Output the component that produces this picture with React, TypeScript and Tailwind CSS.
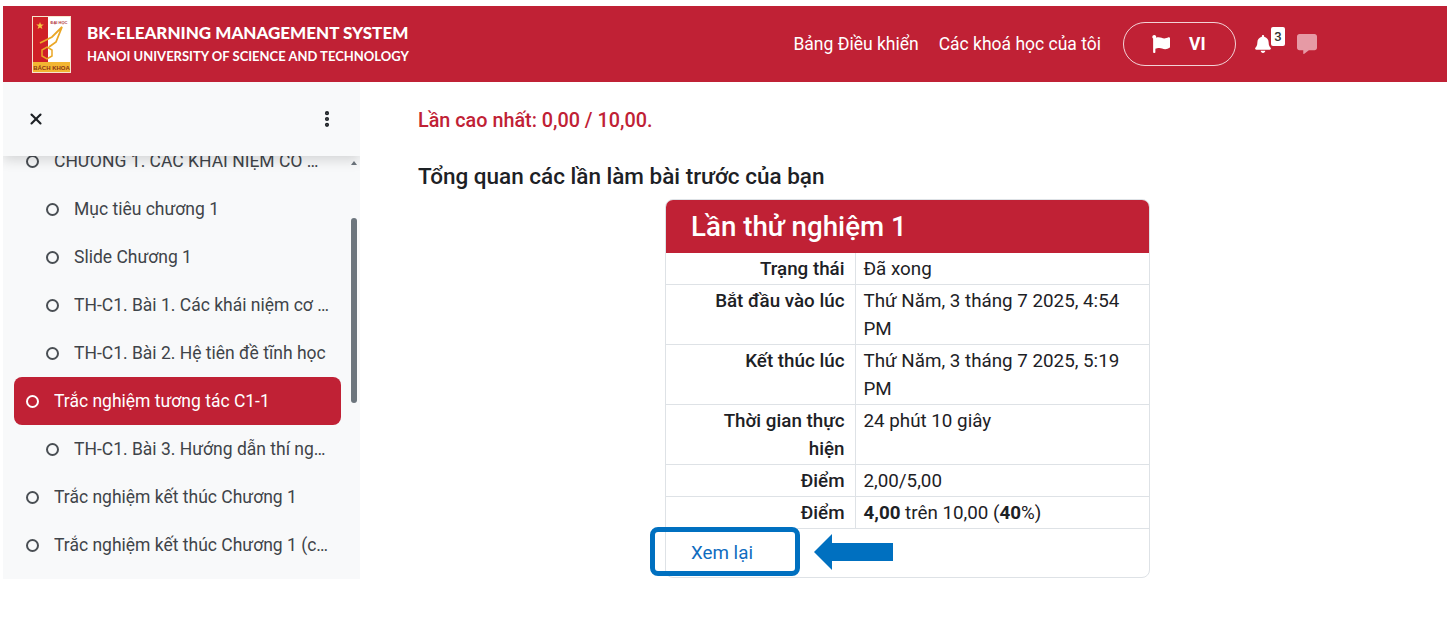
import { MoreVertical, X } from 'lucide-react';
import type { ReactNode } from 'react';
import { FaBell, FaCommentAlt, FaFlag } from 'react-icons/fa';

const rows = [
  { label: 'CHƯƠNG 1. CÁC KHÁI NIỆM CƠ BẢN', sub: false },
  { label: 'Mục tiêu chương 1', sub: true },
  { label: 'Slide Chương 1', sub: true },
  { label: 'TH-C1. Bài 1. Các khái niệm cơ bản', sub: true },
  { label: 'TH-C1. Bài 2. Hệ tiên đề tĩnh học', sub: true },
  { label: 'Trắc nghiệm tương tác C1-1', sub: false, active: true },
  { label: 'TH-C1. Bài 3. Hướng dẫn thí nghiệm', sub: true },
  { label: 'Trắc nghiệm kết thúc Chương 1', sub: false },
  { label: 'Trắc nghiệm kết thúc Chương 1 (chính thức)', sub: false },
];

function Logo() {
  return (
    <svg width="39" height="57" viewBox="0 0 39 57" className="shrink-0">
      <rect width="39" height="57" fill="#f6e6cf" />
      <rect x="1" y="1" width="15" height="45" fill="#cf2027" />
      <rect x="16" y="1" width="22" height="45" fill="#ffffff" />
      <rect x="1" y="46" width="37" height="10" fill="#f2b632" />
      <polygon points="8,6 9,8.600 11.800,8.600 9.500,10.300 10.400,13 8,11.400 5.600,13 6.500,10.300 4.200,8.600 7,8.600" fill="#f5c542" />
      <text x="27" y="8" textAnchor="middle" fontSize="4" fontWeight="700" fill="#b0303a" fontFamily="Liberation Sans, sans-serif">ĐẠI HỌC</text>
      <path d="M8 27 L20 21 L30 11 L24 26 L17 31" fill="none" stroke="#eaa726" strokeWidth="1.800" />
      <polygon points="15,31 20,34 20,40 15,43 10,40 10,34" fill="none" stroke="#eaa726" strokeWidth="1.500" />
      <text x="19.500" y="53.500" textAnchor="middle" fontSize="6" fontWeight="700" fill="#8a3416" fontFamily="Liberation Sans, sans-serif">BÁCH KHOA</text>
    </svg>
  );
}

function Row({ label, value }: { label: string; value: ReactNode }) {
  return (
    <tr className="border-b border-[#dee2e6] align-top">
      <th className="w-[189px] border-r border-[#dee2e6] py-[1.500px] pl-6 pr-[10px] text-right font-medium">{label}</th>
      <td className="py-[1.500px] pl-2 pr-2">{value}</td>
    </tr>
  );
}

export default function App() {
  return (
    <div className="relative h-[637px] w-[1447px] overflow-hidden bg-white pl-[3px] pt-[6px] font-['Roboto',sans-serif] text-[#1d2125]">
      <header className="flex h-[76px] items-center justify-between bg-[#c02135] pl-[29px] pr-[130px] text-white">
        <div className="flex items-center">
          <Logo />
          <div className="ml-4 font-['Lato','Roboto',sans-serif]">
            <div className="whitespace-nowrap text-[17px] font-black leading-[22px]">BK-ELEARNING MANAGEMENT SYSTEM</div>
            <div className="mt-0.5 whitespace-nowrap text-[13px] font-bold leading-5">HANOI UNIVERSITY OF SCIENCE AND TECHNOLOGY</div>
          </div>
        </div>
        <nav className="flex items-center text-[17.500px]">
          <a>Bảng Điều khiển</a>
          <a className="ml-5">Các khoá học của tôi</a>
          <div className="ml-[22px] flex h-11 w-[113px] items-center rounded-full border border-white/80 pl-7 font-bold">
            <FaFlag size={18} />
            <span className="ml-[19px]">VI</span>
          </div>
          <div className="relative ml-[18px]">
            <FaBell size={18} />
            <span className="absolute -top-[8px] left-[17px] h-[19px] w-[14px] rounded-[2px] bg-white text-center text-[13px] font-medium leading-[19px] text-[#333]">3</span>
          </div>
          <FaCommentAlt size={20} className="ml-[25px] text-[#e69aa5]" />
        </nav>
      </header>

      <div className="flex items-start">
        <aside className="relative h-[497px] w-[357px] overflow-hidden bg-[#f8f9fa]">
          <div className="relative z-10 flex h-[74px] items-center justify-between bg-[#f8f9fa] pl-[24px] pr-[23px] shadow-[0_4px_12px_rgba(0,0,0,0.15)]">
            <X size={18} strokeWidth={2.800} />
            <MoreVertical size={20} strokeWidth={3} />
          </div>
          <ul className="-mt-[19px] pl-[11px] pr-[19px] text-[17.500px] text-[#3f4449]">
            {rows.map((r) => (
              <li
                key={r.label}
                className={`flex h-12 items-center rounded-lg ${r.active ? 'bg-[#c02135] text-white' : ''} ${r.sub ? 'pl-8' : 'pl-3'}`}
              >
                <span className={`size-[13px] shrink-0 rounded-full border-2 ${r.active ? 'border-white' : 'border-[#4a4f54]'}`} />
                <span className="ml-[15px] truncate pr-3">{r.label}</span>
              </li>
            ))}
          </ul>
          <div className="absolute left-[348px] top-[136px] h-[185px] w-[6px] rounded-full bg-[#6c757d]" />
          <div className="absolute left-[348px] top-[79px] size-0 border-x-[3px] border-b-[4px] border-x-transparent border-b-[#6c757d]" />
        </aside>

        <main className="flex-1 pl-[58px]">
          <p className="mt-[27px] text-[19.800px] font-medium leading-6 text-[#c02135]">Lần cao nhất: 0,00 / 10,00.</p>
          <h3 className="mt-[30px] text-[22.500px] font-medium leading-[26px]">Tổng quan các lần làm bài trước của bạn</h3>

          <div className="ml-[247px] mt-[10px] w-[485px] overflow-hidden rounded-lg border border-[#dee2e6] bg-white">
            <div className="flex h-[53px] items-center bg-[#c02135] pl-[25px] pt-px text-[27.700px] font-medium text-white">Lần thử nghiệm 1</div>
            <table className="w-full border-collapse text-[18.800px] leading-7">
              <tbody>
                <Row label="Trạng thái" value="Đã xong" />
                <Row label="Bắt đầu vào lúc" value="Thứ Năm, 3 tháng 7 2025, 4:54 PM" />
                <Row label="Kết thúc lúc" value="Thứ Năm, 3 tháng 7 2025, 5:19 PM" />
                <Row label="Thời gian thực hiện" value="24 phút 10 giây" />
                <Row label="Điểm" value="2,00/5,00" />
                <Row
                  label="Điểm"
                  value={
                    <>
                      <b>4,00</b> trên 10,00 (<b>40</b>%)
                    </>
                  }
                />
              </tbody>
            </table>
            <div className="flex h-12 items-center pl-[25px] text-[18.800px] text-[#0f6cbf]">Xem lại</div>
          </div>
        </main>
      </div>

      {/* annotation drawn over the screenshot */}
      <div className="absolute left-[650px] top-[527px] h-[49px] w-[150px] rounded-lg border-[5px] border-[#0070c0]" />
      <svg className="absolute left-[814px] top-[534px]" width="80" height="36" viewBox="0 0 80 36">
        <polygon points="0,18 18,0 18,9 79,9 79,27 18,27 18,36" fill="#0070c0" />
      </svg>
    </div>
  );
}
